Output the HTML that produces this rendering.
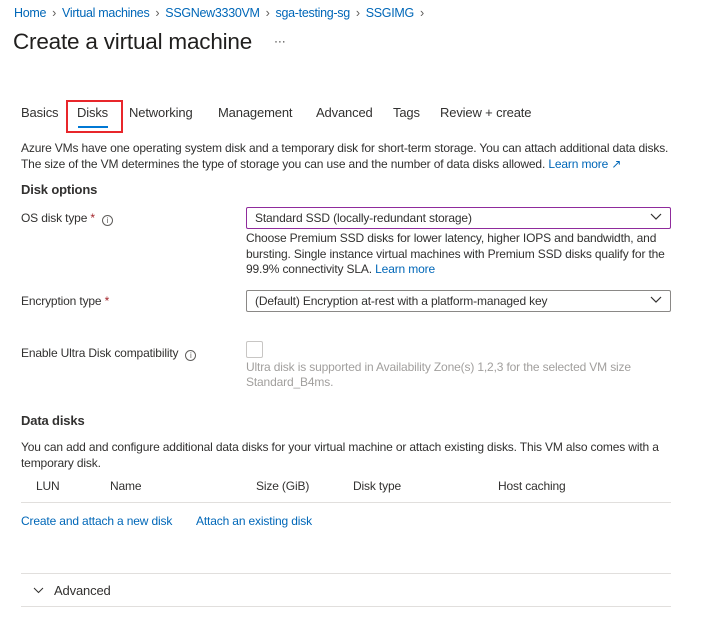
<!DOCTYPE html>
<html><head><meta charset="utf-8"><style>
*{margin:0;padding:0;box-sizing:border-box}
body{width:706px;height:637px;background:#fff;font-family:"Liberation Sans",sans-serif;color:#323130;position:relative;overflow:hidden;font-size:12px;letter-spacing:-0.15px}
.a{position:absolute;white-space:nowrap;line-height:16px}
.l{color:#0067b8}
.g{color:#a19f9d}
.sep{color:#605e5c;margin:0 6px}
.sel{position:absolute;left:246px;width:425px;height:22px;border:1px solid #8a8886;border-radius:2px}
.sel span{position:absolute;left:8px;top:2px;line-height:16px}
.chev{position:absolute;right:8px;top:5px}
.hr{position:absolute;left:21px;width:650px;height:1px;background:#e1dfdd}
.info{display:inline-block;width:11px;height:11px;border:1px solid #605e5c;border-radius:50%;font-size:8px;line-height:9px;text-align:center;vertical-align:-1px;margin-left:7px;color:#605e5c;letter-spacing:0}
.req{color:#a4262c}
</style></head><body>
<div class="a" style="left:14px;top:5px;font-size:12.5px;letter-spacing:-0.3px"><span class="l">Home</span><span class="sep">›</span><span class="l">Virtual machines</span><span class="sep">›</span><span class="l">SSGNew3330VM</span><span class="sep">›</span><span class="l">sga-testing-sg</span><span class="sep">›</span><span class="l">SSGIMG</span><span class="sep">›</span></div>
<div class="a" style="left:13px;top:29px;font-size:22.5px;line-height:26px;color:#201f1e;letter-spacing:-0.2px">Create a virtual machine</div>
<div class="a" style="left:274px;top:33px;font-size:12px">···</div>

<div class="a" style="left:21px;top:105px;font-size:13px">Basics</div>
<div class="a" style="left:77px;top:105px;font-size:13px">Disks</div>
<div style="position:absolute;left:78px;top:126px;width:30px;height:2px;background:#0078d4"></div>
<div style="position:absolute;left:66px;top:100px;width:57px;height:33px;border:2px solid #e8262b"></div>
<div class="a" style="left:129px;top:105px;font-size:13px">Networking</div>
<div class="a" style="left:218px;top:105px;font-size:13px">Management</div>
<div class="a" style="left:316px;top:105px;font-size:13px">Advanced</div>
<div class="a" style="left:393px;top:105px;font-size:13px">Tags</div>
<div class="a" style="left:440px;top:105px;font-size:13px">Review + create</div>

<div class="a" style="left:21px;top:140px">Azure VMs have one operating system disk and a temporary disk for short-term storage. You can attach additional data disks.</div>
<div class="a" style="left:21px;top:156px">The size of the VM determines the type of storage you can use and the number of data disks allowed. <span class="l">Learn more ↗</span></div>

<div class="a" style="left:21px;top:182px;font-size:13px;font-weight:bold;color:#323130">Disk options</div>

<div class="a" style="left:21px;top:210px">OS disk type <span class="req">*</span><span class="info">i</span></div>
<div class="sel" style="top:207px;border-color:#8f2b9c"><span>Standard SSD (locally-redundant storage)</span><svg class="chev" width="12" height="8"><path d="M1 1l5 5 5-5" stroke="#323130" fill="none" stroke-width="1.2"/></svg></div>
<div class="a" style="left:246px;top:230px">Choose Premium SSD disks for lower latency, higher IOPS and bandwidth, and</div>
<div class="a" style="left:246px;top:246px">bursting. Single instance virtual machines with Premium SSD disks qualify for the</div>
<div class="a" style="left:246px;top:261px">99.9% connectivity SLA.  <span class="l">Learn more</span></div>

<div class="a" style="left:21px;top:293px">Encryption type <span class="req">*</span></div>
<div class="sel" style="top:290px"><span>(Default) Encryption at-rest with a platform-managed key</span><svg class="chev" width="12" height="8"><path d="M1 1l5 5 5-5" stroke="#323130" fill="none" stroke-width="1.2"/></svg></div>

<div class="a" style="left:21px;top:345px">Enable Ultra Disk compatibility<span class="info">i</span></div>
<div style="position:absolute;left:246px;top:341px;width:17px;height:17px;border:1px solid #c8c6c4;border-radius:2px"></div>
<div class="a g" style="left:246px;top:359px">Ultra disk is supported in Availability Zone(s) 1,2,3 for the selected VM size</div>
<div class="a g" style="left:246px;top:374px">Standard_B4ms.</div>

<div class="a" style="left:21px;top:413px;font-size:13px;font-weight:bold">Data disks</div>
<div class="a" style="left:21px;top:439px">You can add and configure additional data disks for your virtual machine or attach existing disks. This VM also comes with a</div>
<div class="a" style="left:21px;top:455px">temporary disk.</div>
<div class="a" style="left:36px;top:478px">LUN</div>
<div class="a" style="left:110px;top:478px">Name</div>
<div class="a" style="left:256px;top:478px">Size (GiB)</div>
<div class="a" style="left:353px;top:478px">Disk type</div>
<div class="a" style="left:498px;top:478px">Host caching</div>
<div class="hr" style="top:502px"></div>
<div class="a l" style="left:21px;top:513px">Create and attach a new disk</div>
<div class="a l" style="left:196px;top:513px">Attach an existing disk</div>
<div class="hr" style="top:573px"></div>
<svg style="position:absolute;left:33px;top:587px" width="11" height="7"><path d="M1 1l4.5 4.5L10 1" stroke="#323130" fill="none" stroke-width="1"/></svg>
<div class="a" style="left:54px;top:583px;font-size:13px">Advanced</div>
<div class="hr" style="top:606px"></div>
</body></html>
